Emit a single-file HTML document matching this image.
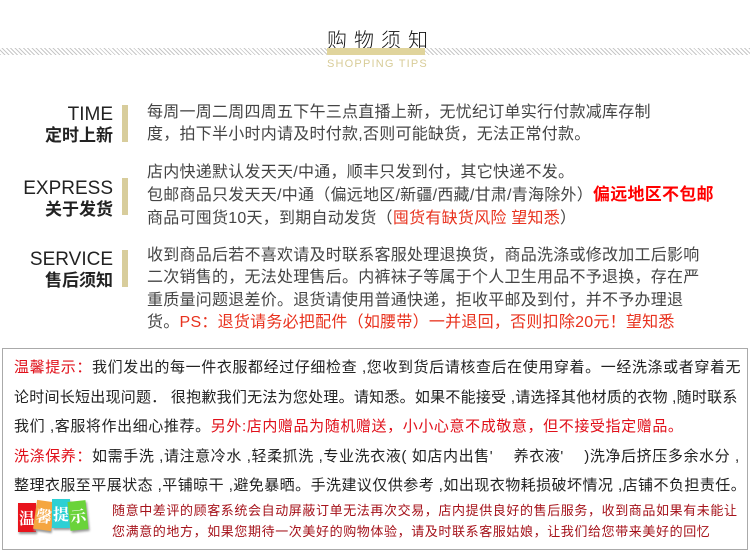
<!DOCTYPE html>
<html><head><meta charset="utf-8"><style>
*{margin:0;padding:0;box-sizing:border-box}
body{width:750px;height:555px;background:#fff;position:relative;overflow:hidden;font-family:"Liberation Sans","Noto Sans CJK SC",sans-serif;color:#333}
.abs{position:absolute;white-space:nowrap}
.hatch{position:absolute;left:0;top:48px;width:750px;height:7px;background:repeating-linear-gradient(45deg,#c8c8c8 0 1px,#fff 1px 3px)}
.lab{position:absolute;right:637px;text-align:right;color:#222;line-height:21px}
.lab .en{font-size:19px}
.lab .cn{font-size:17px;font-weight:bold}
.bar{position:absolute;left:122px;width:6px;background:#d8cd9c}
.t{position:absolute;left:147px;font-size:16px;letter-spacing:.25px;line-height:22.3px;color:#444;white-space:nowrap}
.r{color:#e8321e}
.box{position:absolute;left:2px;top:348px;width:746px;height:202px;border:1px solid #aaa}
.bl{position:absolute;left:14px;font-size:15px;color:#222;white-space:nowrap;letter-spacing:.6px}
.rd{color:#e0101a}
.tile{position:absolute;width:18px;height:29px;color:#fff;font-size:16px;font-weight:bold;text-align:center;line-height:29px;font-family:"Noto Serif CJK SC",serif;box-shadow:1px 2px 2px #999}
.bt{position:absolute;left:112px;font-size:13px;color:#a5121a;white-space:nowrap;line-height:21px;letter-spacing:.6px}
</style></head><body>
<div class="abs" style="left:327px;top:24px;font-size:20px;letter-spacing:7px;color:#111;font-weight:300">购物须知</div>
<div class="hatch"></div>
<div class="abs" style="left:327px;top:48px;width:98px;height:7px;background:#e0d49c"></div>
<div class="abs" style="left:327px;top:58px;width:98px;text-align:center;font-size:11px;letter-spacing:1.2px;color:#d8cc98">SHOPPING TIPS</div>

<div class="lab" style="top:104px"><div class="en">TIME</div><div class="cn">定时上新</div></div>
<div class="bar" style="top:105px;height:37px"></div>
<div class="t" style="top:102px">每周一周二周四周五下午三点直播上新，无忧纪订单实行付款减库存制<br>度，拍下半小时内请及时付款,否则可能缺货，无法正常付款。</div>

<div class="lab" style="top:178px"><div class="en">EXPRESS</div><div class="cn">关于发货</div></div>
<div class="bar" style="top:178px;height:37px"></div>
<div class="t" style="top:162px">店内快递默认发天天/中通，顺丰只发到付，其它快递不发。<br>包邮商品只发天天/中通（偏远地区/新疆/西藏/甘肃/青海除外）<b class="r" style="color:#f00;font-size:17px">偏远地区不包邮</b><br>商品可囤货10天，到期自动发货（<span class="r">囤货有缺货风险 望知悉</span>）</div>

<div class="lab" style="top:249px"><div class="en">SERVICE</div><div class="cn">售后须知</div></div>
<div class="bar" style="top:250px;height:37px"></div>
<div class="t" style="top:245px">收到商品后若不喜欢请及时联系客服处理退换货，商品洗涤或修改加工后影响<br>二次销售的，无法处理售后。内裤袜子等属于个人卫生用品不予退换，存在严<br>重质量问题退差价。退货请使用普通快递，拒收平邮及到付，并不予办理退<br>货。<span class="r">PS：退货请务必把配件（如腰带）一并退回，否则扣除20元！望知悉</span></div>

<div class="box"></div>
<div class="bl" style="top:356px"><span class="rd">温馨提示：</span>我们发出的每一件衣服都经过仔细检查 ,您收到货后请核查后在使用穿着。一经洗涤或者穿着无</div>
<div class="bl" style="top:386px;letter-spacing:.25px">论时间长短出现问题． 很抱歉我们无法为您处理。请知悉。如果不能接受 ,请选择其他材质的衣物 ,随时联系</div>
<div class="bl" style="top:415px">我们 ,客服将作出细心推荐。<span class="rd">另外:店内赠品为随机赠送，小小心意不成敬意，但不接受指定赠品。</span></div>
<div class="bl" style="top:445px"><span class="rd">洗涤保养：</span>如需手洗 ,请注意冷水 ,轻柔抓洗 ,专业洗衣液( 如店内出售'　 养衣液'　 )洗净后挤压多余水分 ,</div>
<div class="bl" style="top:474px;letter-spacing:.45px">整理衣服至平展状态 ,平铺晾干 ,避免暴晒。手洗建议仅供参考 ,如出现衣物耗损破坏情况 ,店铺不负担责任。</div>

<div class="tile" style="left:18px;top:503px;background:#e8141c">温</div>
<div class="tile" style="left:35px;top:501px;background:#f5a640;transform:rotate(8deg)">馨</div>
<div class="tile" style="left:52px;top:499px;background:#2dd0d4">提</div>
<div class="tile" style="left:69px;top:501px;background:#6ad33a;transform:rotate(-6deg)">示</div>
<div class="bt" style="top:500px">随意中差评的顾客系统会自动屏蔽订单无法再次交易，店内提供良好的售后服务，收到商品如果有未能让</div>
<div class="bt" style="top:521px">您满意的地方，如果您期待一次美好的购物体验，请及时联系客服姑娘，让我们给您带来美好的回忆</div>
</body></html>
